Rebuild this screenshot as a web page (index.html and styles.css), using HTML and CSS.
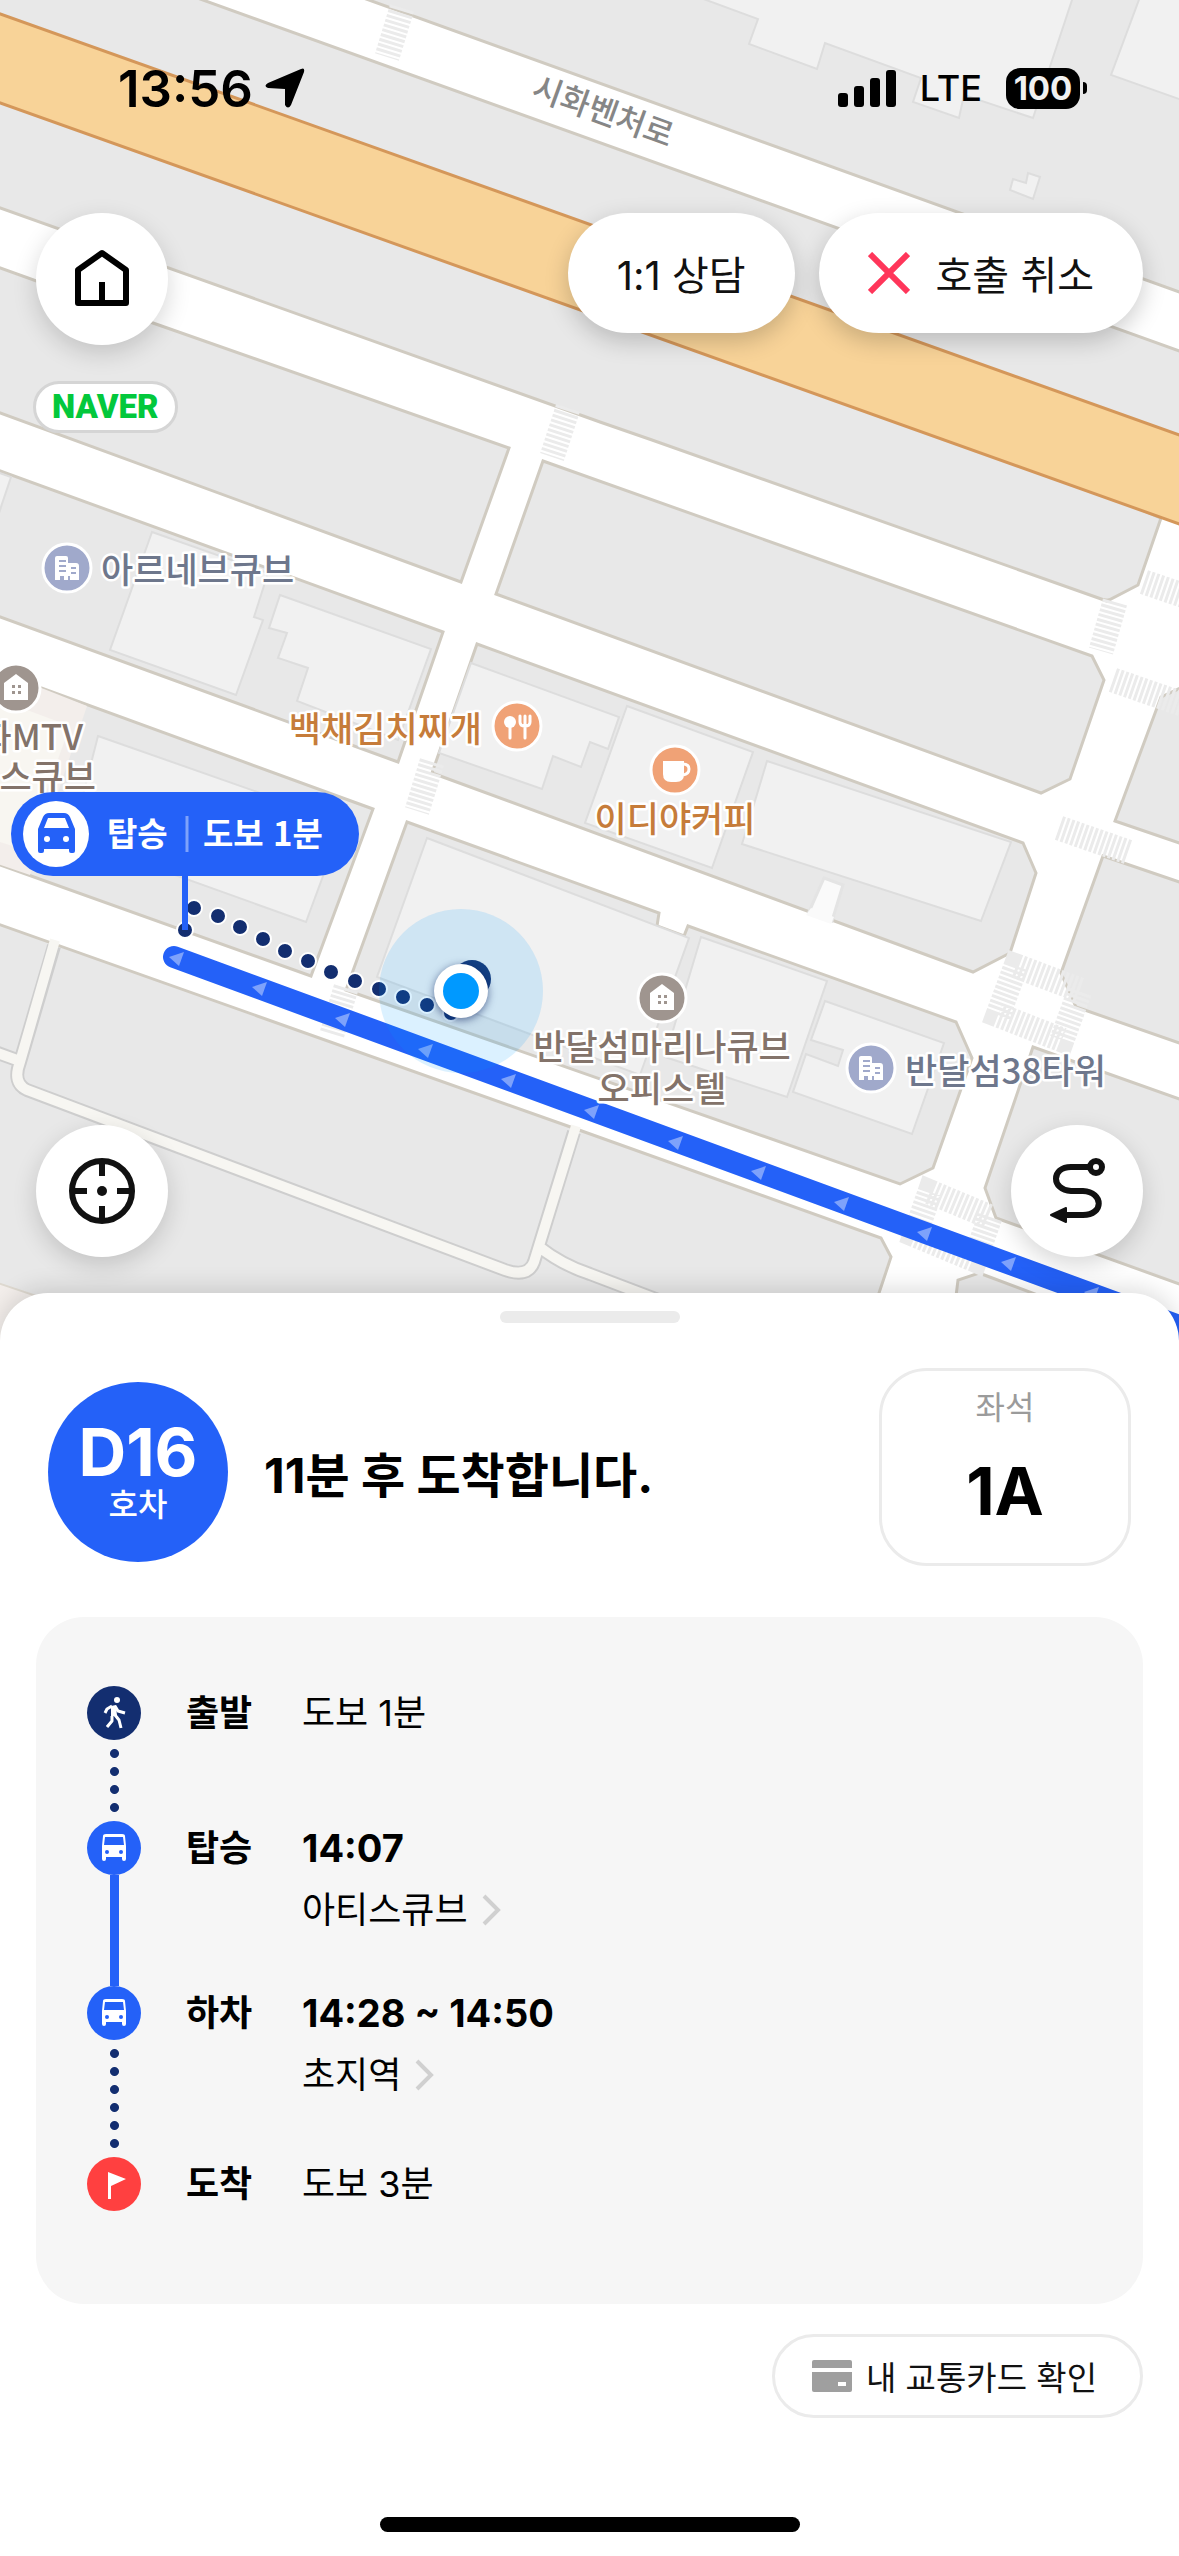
FILE: index.html
```html
<!DOCTYPE html>
<html lang="ko">
<head>
    <meta charset="UTF-8">
    <meta name="viewport" content="width=device-width, initial-scale=1.0">
    <title>호출 현황</title>
    <link rel="stylesheet" href="styles.css">
</head>
<body>
    <section class="map">
        <svg class="map-canvas" viewBox="0 0 1179 1341" preserveAspectRatio="xMidYMid slice">
            <defs>
                <g id="poi-building">
                    <circle r="24" fill="#a0a9cb" stroke="#fff" stroke-width="3"/>
                    <path d="M-12 12V-10q0-2 2-2H-1q2 0 2 2V-5H9q3 0 3 3V12H3V8H1v4H-3V8H-7v4z" fill="#fff"/>
                    <path d="M-8-7H-1M-8-2H-1M-8 3H-1M4 0H9M4 5H9" stroke="#a0a9cb" stroke-width="2"/>
                </g>
                <g id="poi-house">
                    <circle r="24" fill="#9f958f" stroke="#fff" stroke-width="3"/>
                    <path d="M0-14L12-5V12H-12V-5z" fill="#fff"/>
                    <path d="M-4-3h3v3h-3zM2-3h3v3H2zM-4 3h3v3h-3zM2 3h3v3H2z" fill="#9f958f"/>
                </g>
                <path id="route-arrow" d="M-7-2L8-7L3 7z" fill="#7ea2fb"/>
            </defs>

            <rect width="1179" height="1341" fill="#fff"/>

            <!-- Land blocks -->
            <g class="blocks">
                <path d="M355-5L1185 294V-5z"/>
                <path d="M-5-5H189L1185 353V600H-5z"/>
            </g>
            <path d="M-5 206L600 422L1107 601L1138 585L1161 518L1190 520V700H-5z" fill="#fff"/>
            <g class="blocks">
                <path d="M-5 206L600 422L652 440L1107 601L1138 585L1161 518L1000 450L-5 100" fill="none"/>
                <path d="M-5 266L153 323L509 448L461 582L-5 411z"/>
                <path d="M543 461L1092 656L1104 680L1070 779L1041 793L496 594z"/>
                <path d="M-5 469L443 632L398 762L-5 615z"/>
                <path d="M477 644L1023 843L1036 873L1010 953L973 972L432 773z"/>
                <path d="M-5 671L373 809L311 976L-5 863z"/>
                <path d="M407 822L659 913L657 926L684 936L688 926L956 1022L972 1058L933 1168L900 1184L346 990z"/>
                <path d="M1185 686L1161 697L1115 821L1185 845z"/>
                <path d="M1103 856L1185 884V1045L1076 1007L1061 973z"/>
                <path d="M1033 1047L1185 1101V1286L996 1218L985 1188z"/>
                <path d="M-5 923L579 1130L881 1238L891 1257L860 1350H-5z"/>
                <path d="M979 1273L1170 1345H950L958 1280z"/>
            </g>
            <path d="M-5 671L44 689L87 706L30 875L-5 863z" fill="#f3eeeb"/>
            <path d="M0 700L70 726L25 850L0 842z" fill="#f8f6f1"/>
            <path d="M-5 1282L60 1304V1345H-5z" fill="#f3eeeb" stroke="#ded9d0" stroke-width="2"/>

            <!-- Highway -->
            <path d="M-5 12L1185 437V526L-5 101z" fill="#f8d398" stroke="#d4975a" stroke-width="3"/>

            <!-- Buildings -->
            <g class="buildings">
                <path d="M698-3L758 19L749 44L817 69L825 43L921 78L913 102L959 118L964 95L1033 118L1073-3z"/>
                <path d="M1140-3L1111 75L1182 100V-3z"/>
                <path d="M1013 179L1026 183L1028 173L1040 177L1033 199L1010 190z"/>
                <path d="M-3 472L11 477L-3 519z"/>
                <path d="M152 532L268 573L254 617L263 620L236 695L110 650z"/>
                <path d="M280 595L431 649L398 740L297 701L308 668L278 658L287 633L269 628z"/>
                <path d="M471 663L619 717L608 749L590 742L581 767L553 756L542 789L439 753z"/>
                <path d="M627 706L753 752L712 868L585 823z"/>
                <path d="M767 761L1011 842L981 921L742 844z"/>
                <path d="M98 736L343 822L306 922L72 838z"/>
                <path d="M427 838L689 938L640 1075L377 977z"/>
                <path d="M701 937L827 981L787 1097L665 1057z"/>
                <path d="M825 1001L944 1043L912 1134L793 1092L806 1054L838 1066L843 1050L811 1040z"/>
            </g>
            <path d="M824 878L843 885L832 921L809 912z" fill="#fafafa" stroke="#e4e4e4" stroke-width="3"/>
            <path d="M811 908L834 917L831 924L806 915z" fill="#fafafa"/>

            <!-- Footpaths -->
            <g class="path-edge">
                <path d="M-5 1052L17 1060M54 946L20 1062Q12 1083 27 1090L505 1270Q528 1278 534 1262L574 1132M538 1246Q562 1265 590 1274L690 1312"/>
            </g>
            <g class="path-fill">
                <path d="M-5 1052L17 1060M55 940L20 1062Q12 1083 27 1090L505 1270Q528 1278 534 1262L576 1126M538 1246Q562 1265 590 1274L690 1312"/>
            </g>

            <!-- Crosswalks -->
            <g class="crosswalk">
                <path d="M402 8L387 57"/>
                <path d="M568 408L552 457"/>
                <path d="M432 762L417 811"/>
                <path d="M346 988L332 1034"/>
                <path d="M1115 602L1101 651"/>
                <path d="M1144 582L1185 596"/>
                <path d="M1113 680L1185 705"/>
                <path d="M1059 828L1128 852"/>
                <path d="M1016 966L1080 990L1062 1040L998 1015z"/>
                <path d="M930 1192L990 1217L975 1260L915 1235z"/>
            </g>

            <text class="road-name" transform="translate(604 109) rotate(20)">시화벤처로</text>

            <!-- Bus route -->
            <path d="M174 957L1179 1326L1200 1345" fill="none" stroke="#2461f8" stroke-width="22" stroke-linecap="round" stroke-linejoin="round"/>
            <use href="#route-arrow" x="176" y="959"/>
            <use href="#route-arrow" x="259" y="989"/>
            <use href="#route-arrow" x="342" y="1020"/>
            <use href="#route-arrow" x="425" y="1051"/>
            <use href="#route-arrow" x="508" y="1081"/>
            <use href="#route-arrow" x="591" y="1112"/>
            <use href="#route-arrow" x="675" y="1143"/>
            <use href="#route-arrow" x="758" y="1173"/>
            <use href="#route-arrow" x="841" y="1204"/>
            <use href="#route-arrow" x="924" y="1234"/>
            <use href="#route-arrow" x="1008" y="1264"/>
            <use href="#route-arrow" x="1091" y="1294"/>

            <!-- Walking route -->
            <g class="walk-dots">
                <circle cx="185" cy="930" r="8"/>
                <circle cx="194" cy="908" r="8"/>
                <circle cx="218" cy="916" r="8"/>
                <circle cx="240" cy="927" r="8"/>
                <circle cx="263" cy="939" r="8"/>
                <circle cx="285" cy="951" r="8"/>
                <circle cx="308" cy="961" r="8"/>
                <circle cx="331" cy="972" r="8"/>
                <circle cx="355" cy="981" r="8"/>
                <circle cx="379" cy="989" r="8"/>
                <circle cx="403" cy="997" r="8"/>
                <circle cx="427" cy="1005" r="8"/>
                <circle cx="451" cy="1013" r="8"/>
            </g>

            <!-- Places -->
            <use href="#poi-building" x="67" y="568"/>
            <text class="poi office" x="101" y="583">아르네브큐브</text>

            <g transform="translate(517 726)">
                <circle r="24" fill="#f0a276" stroke="#fff" stroke-width="3"/>
                <circle cx="-7" cy="-4" r="6" fill="#fff"/>
                <path d="M-7 0V12M8-1V12M3-10V-4Q3 0 8 0Q13 0 13-4V-10M8-10V0" fill="none" stroke="#fff" stroke-width="3" stroke-linecap="round"/>
            </g>
            <text class="poi food end" x="482" y="742">백채김치찌개</text>

            <g transform="translate(675 770)">
                <circle r="24" fill="#f0a276" stroke="#fff" stroke-width="3"/>
                <path d="M-12-9H9V4Q9 12 1 12H-4Q-12 12-12 4z" fill="#fff"/>
                <path d="M8-6Q14-6 14-1Q14 4 8 5" fill="none" stroke="#fff" stroke-width="3"/>
            </g>
            <text class="poi food middle" x="675" y="832">이디야커피</text>

            <use href="#poi-house" x="16" y="688"/>
            <text class="poi home end" x="83" y="750">시화MTV</text>
            <text class="poi home end" x="96" y="790">스큐브</text>

            <use href="#poi-house" x="662" y="998"/>
            <text class="poi home middle" x="662" y="1060">반달섬마리나큐브</text>
            <text class="poi home middle" x="662" y="1102">오피스텔</text>

            <use href="#poi-building" x="871" y="1068"/>
            <text class="poi office" x="905" y="1084">반달섬38타워</text>

            <!-- Boarding stop -->
            <path d="M185 870V930" stroke="#2461f8" stroke-width="6"/>
            <rect x="11" y="792" width="348" height="84" rx="42" fill="#2461f8"/>
            <circle cx="56" cy="834" r="33" fill="#fff"/>
            <path d="M38 851V829L43 817Q45 813 49 813H64Q68 813 70 817L75 829V851Q75 853 73 853H71Q69 853 69 851V849H44V851Q44 853 42 853H40Q38 853 38 851z" fill="#2461f8"/>
            <path d="M44 828L48 818H65L69 828z" fill="#fff"/>
            <circle cx="47" cy="839" r="3" fill="#fff"/>
            <circle cx="66" cy="839" r="3" fill="#fff"/>
            <text class="stop-text" x="107" y="846">탑승</text>
            <path d="M187 816V852" stroke="#7ea2fb" stroke-width="3"/>
            <text class="stop-text" x="203" y="846">도보 1분</text>

            <!-- Current location -->
            <circle cx="461" cy="991" r="82" fill="#0099ff" fill-opacity=".14"/>
            <circle cx="472" cy="979" r="19" fill="#123f83"/>
            <circle class="me" cx="461" cy="991" r="27"/>
            <circle cx="461" cy="991" r="18" fill="#0099ff"/>
        </svg>

        <div class="status-bar">
            <div class="status-left">
                <span class="time">13:56</span>
                <svg width="40" height="40" viewBox="0 0 40 40">
                    <path d="M36 1Q40-1 39 4L26 37Q23 42 20 37V21L3 20Q-2 18 3 15z"/>
                </svg>
            </div>
            <div class="status-right">
                <svg width="58" height="38" viewBox="0 0 58 38">
                    <rect y="24" width="10" height="14" rx="3"/>
                    <rect x="16" y="17" width="10" height="21" rx="3"/>
                    <rect x="32" y="9" width="10" height="29" rx="3"/>
                    <rect x="48" y="1" width="10" height="37" rx="3"/>
                </svg>
                <span class="network">LTE</span>
                <span class="battery">100</span>
            </div>
        </div>

        <div class="map-nav">
            <button class="round-btn" aria-label="홈">
                <svg viewBox="0 0 132 132">
                    <path d="M42 90V57L66 40L90 57V90zM66 90V69" fill="none" stroke="#000" stroke-width="6" stroke-linejoin="round"/>
                </svg>
            </button>
            <div class="nav-actions">
                <button class="pill-btn">1:1 상담</button>
                <button class="pill-btn cancel">
                    <svg width="42" height="42" viewBox="0 0 42 42">
                        <path d="M2 2L40 40M40 2L2 40" stroke="#ff365a" stroke-width="6"/>
                    </svg>
                    호출 취소
                </button>
            </div>
        </div>

        <span class="provider">NAVER</span>

        <div class="map-tools">
            <button class="round-btn" aria-label="현재 위치">
                <svg viewBox="0 0 132 132">
                    <g fill="none" stroke="#111" stroke-width="6">
                        <circle cx="66" cy="66" r="30"/>
                        <path d="M66 36V51M66 81V96M36 66H51M81 66H96"/>
                    </g>
                    <circle cx="66" cy="66" r="5" fill="#111"/>
                </svg>
            </button>
            <button class="round-btn" aria-label="경로 보기">
                <svg viewBox="0 0 132 132">
                    <g fill="none" stroke="#111" stroke-width="6">
                        <circle cx="85" cy="42" r="6"/>
                        <path d="M79 42H60C40 42 40 65 60 66L72 66C93 67 93 90 72 90H54"/>
                    </g>
                    <path d="M40 90L55 83V97z" fill="#111" stroke="#111" stroke-width="2" stroke-linejoin="round"/>
                </svg>
            </button>
        </div>
    </section>

    <main class="sheet">
        <div class="handle"></div>

        <div class="ride-head">
            <div class="ride-info">
                <div class="bus-badge">
                    <strong>D16</strong>
                    <span>호차</span>
                </div>
                <h1>11분 후 도착합니다.</h1>
            </div>
            <div class="seat">
                <span>좌석</span>
                <strong>1A</strong>
            </div>
        </div>

        <ol class="steps">
            <li>
                <div class="rail">
                    <svg class="step-icon walk" viewBox="0 0 54 54">
                        <circle cx="30" cy="14" r="3" fill="#fff"/>
                        <path d="M24 20L29 19L30 30L24 30z" fill="#fff"/>
                        <path d="M25 20L20 23L18 27M28 20L31 25L38 27M28 29L32 34L34 42M25 30L25 35L20 41" fill="none" stroke="#fff" stroke-width="3" stroke-linejoin="round"/>
                    </svg>
                    <i class="dots four"></i>
                </div>
                <b class="step-name">출발</b>
                <div class="step-detail">도보 1분</div>
            </li>
            <li>
                <div class="rail">
                    <svg class="step-icon bus" viewBox="0 0 54 54">
                        <path d="M15 38V25L16 15Q16 13 19 13H35Q38 13 38 15L39 25V38Q39 40 37 40Q35 40 35 38V36H19V38Q19 40 17 40Q15 40 15 38z" fill="#fff"/>
                        <path d="M17 24L18 16H36L37 24z"/>
                        <circle cx="20" cy="31" r="2"/>
                        <circle cx="34" cy="31" r="2"/>
                    </svg>
                    <i class="line"></i>
                </div>
                <b class="step-name">탑승</b>
                <div class="step-detail">
                    <b>14:07</b>
                    <a href="#">아티스큐브
                        <svg width="20" height="32" viewBox="0 0 20 32"><path d="M2 2L16 16L2 30"/></svg>
                    </a>
                </div>
            </li>
            <li>
                <div class="rail">
                    <svg class="step-icon bus" viewBox="0 0 54 54">
                        <path d="M15 38V25L16 15Q16 13 19 13H35Q38 13 38 15L39 25V38Q39 40 37 40Q35 40 35 38V36H19V38Q19 40 17 40Q15 40 15 38z" fill="#fff"/>
                        <path d="M17 24L18 16H36L37 24z"/>
                        <circle cx="20" cy="31" r="2"/>
                        <circle cx="34" cy="31" r="2"/>
                    </svg>
                    <i class="dots six"></i>
                </div>
                <b class="step-name">하차</b>
                <div class="step-detail">
                    <b>14:28 ~ 14:50</b>
                    <a href="#">초지역
                        <svg width="20" height="32" viewBox="0 0 20 32"><path d="M2 2L16 16L2 30"/></svg>
                    </a>
                </div>
            </li>
            <li>
                <div class="rail">
                    <svg class="step-icon goal" viewBox="0 0 54 54">
                        <path d="M21 15L39 22L24 29V42H21z" fill="#fff"/>
                    </svg>
                </div>
                <b class="step-name">도착</b>
                <div class="step-detail">도보 3분</div>
            </li>
        </ol>

        <div class="sheet-actions">
            <button class="card-btn">
                <svg width="40" height="32" viewBox="0 0 40 32">
                    <rect width="40" height="32" rx="2" fill="#9f9f9f"/>
                    <path d="M0 10H40" stroke="#fff" stroke-width="4"/>
                    <path d="M26 24H34" stroke="#fff" stroke-width="4"/>
                </svg>
                내 교통카드 확인
            </button>
        </div>

        <div class="home-indicator"></div>
    </main>
</body>
</html>
```
FILE: styles.css
```css
* {
    box-sizing: border-box;
}

body {
    margin: 0;
    min-height: 100vh;
    display: flex;
    flex-direction: column;
    background: #fff;
    color: #000;
    font-family: Inter, "Noto Sans CJK KR", sans-serif;
}

button {
    border: none;
    padding: 0;
    background: #fff;
    color: #111;
    font-family: inherit;
    cursor: pointer;
}

svg {
    display: block;
}

/* Map */
.map {
    position: relative;
    flex: 1;
    min-height: 900px;
    display: flex;
    flex-direction: column;
    padding-bottom: 84px;
    overflow: hidden;
}

.map-canvas {
    position: absolute;
    top: 0;
    left: 0;
    width: 100%;
    height: 100%;
}

.status-bar, .map-nav, .provider, .map-tools {
    position: relative;
}

.blocks {
    fill: #e8e8e8;
    stroke: #d0cbc1;
    stroke-width: 3px;
}

.buildings {
    fill: #f1f1f1;
    stroke: #dddddd;
    stroke-width: 2px;
}

.path-edge {
    fill: none;
    stroke: #cecece;
    stroke-width: 14px;
}

.path-fill {
    fill: none;
    stroke: #f7f6f2;
    stroke-width: 10px;
}

.crosswalk {
    fill: none;
    stroke: #ebebeb;
    stroke-width: 25px;
    stroke-dasharray: 3 2;
}

.walk-dots {
    fill: #132e70;
    stroke: #fff;
    stroke-width: 2px;
}

.me {
    fill: #fff;
    filter: drop-shadow(0 2px 4px rgba(10, 30, 90, 0.6));
}

.road-name {
    font: 500 32px "Noto Sans CJK KR", sans-serif;
    fill: #868686;
    text-anchor: middle;
    dominant-baseline: central;
}

.poi {
    font: 500 35px "Noto Sans CJK KR", sans-serif;
    stroke: #fff;
    stroke-width: 5px;
    stroke-linejoin: round;
    paint-order: stroke;
}

.middle {
    text-anchor: middle;
}

.end {
    text-anchor: end;
}

.office {
    fill: #6e778c;
}

.food {
    fill: #c67c3a;
}

.home {
    fill: #83736a;
}

.stop-text {
    font: 700 33px "Noto Sans CJK KR", sans-serif;
    fill: #fff;
}

/* Status bar */
.status-bar {
    display: flex;
    justify-content: space-between;
    align-items: center;
    height: 176px;
    padding: 0 99px 0 118px;
}

.status-left, .status-right {
    display: flex;
    align-items: center;
}

.status-left {
    gap: 12px;
}

.status-right {
    gap: 24px;
}

.time {
    font-size: 51px;
    font-weight: 600;
}

.network {
    font-size: 36px;
    font-weight: 500;
}

.battery {
    position: relative;
    width: 74px;
    border-radius: 14px;
    background: #000;
    color: #f1f1f1;
    font-size: 33px;
    font-weight: 700;
    line-height: 41px;
    text-align: center;
}

.battery::after {
    content: "";
    position: absolute;
    top: 14px;
    right: -7px;
    width: 4px;
    height: 12px;
    border-radius: 0 6px 6px 0;
    background: #000;
}

/* Map controls */
.map-nav {
    display: flex;
    justify-content: space-between;
    align-items: flex-start;
    margin-top: 37px;
    padding: 0 36px;
}

.nav-actions {
    display: flex;
    gap: 24px;
}

.round-btn {
    width: 132px;
    height: 132px;
    border-radius: 50%;
    box-shadow: 0 8px 24px rgba(0, 0, 0, 0.16);
}

.pill-btn {
    display: flex;
    align-items: center;
    gap: 26px;
    height: 120px;
    padding: 0 49px;
    border-radius: 60px;
    font-size: 40px;
    box-shadow: 0 8px 24px rgba(0, 0, 0, 0.2);
}

.provider {
    align-self: flex-start;
    margin: 36px 0 0 33px;
    padding: 0 16px;
    border: 3px solid #d5d5d5;
    border-radius: 26px;
    background: #fff;
    color: #03c83c;
    font-family: Roboto, sans-serif;
    font-size: 33px;
    font-weight: 900;
    line-height: 46px;
}

.map-tools {
    display: flex;
    justify-content: space-between;
    margin-top: auto;
    padding: 0 36px;
}

/* Bottom sheet */
.sheet {
    position: relative;
    margin-top: -48px;
    padding: 18px 36px 24px;
    border-radius: 48px 48px 0 0;
    background: #fff;
    box-shadow: 0 -4px 24px rgba(0, 0, 0, 0.14);
}

.handle {
    width: 180px;
    height: 12px;
    margin: 0 auto;
    border-radius: 6px;
    background: #ebebeb;
}

.ride-head {
    display: flex;
    justify-content: space-between;
    align-items: center;
    margin-top: 45px;
    padding: 0 12px;
}

.ride-info {
    display: flex;
    align-items: center;
    gap: 36px;
    padding-top: 10px;
}

.bus-badge {
    display: flex;
    flex-direction: column;
    align-items: center;
    justify-content: center;
    width: 180px;
    height: 180px;
    border-radius: 50%;
    background: #2461f8;
    color: #fff;
}

.bus-badge strong {
    font-size: 66px;
    line-height: 66px;
}

.bus-badge span {
    font-size: 32px;
    font-weight: 500;
    line-height: 40px;
}

h1 {
    margin: 0;
    font-size: 48px;
    font-weight: 700;
}

.seat {
    display: flex;
    flex-direction: column;
    align-items: center;
    gap: 30px;
    width: 252px;
    height: 198px;
    padding-top: 17px;
    border: 3px solid #ebebeb;
    border-radius: 48px;
}

.seat span {
    color: #9b9b9b;
    font-size: 32px;
    line-height: 40px;
}

.seat strong {
    font-size: 66px;
    line-height: 66px;
}

/* Trip steps */
.steps {
    margin: 51px 0 0;
    padding: 69px 51px 93px;
    border-radius: 48px;
    background: #f6f6f6;
    list-style: none;
    font-size: 36px;
    line-height: 54px;
}

.steps li {
    display: flex;
}

.rail {
    display: flex;
    flex-direction: column;
    align-items: center;
    width: 54px;
    margin-right: 45px;
}

.step-icon {
    width: 54px;
    height: 54px;
    border-radius: 50%;
}

.walk {
    background: #132e70;
}

.bus {
    background: #2461f8;
    fill: #2461f8;
}

.goal {
    background: #ff4040;
}

.dots {
    width: 9px;
    margin: 9px 0;
    background: radial-gradient(circle at 50% 25%, #132e70 4px, transparent 5px) 0 0 / 9px 18px;
}

.four {
    height: 63px;
}

.six {
    height: 99px;
}

.line {
    width: 9px;
    height: 111px;
    background: #2461f8;
}

.step-name {
    width: 116px;
}

.step-detail b {
    display: block;
    font-size: 38px;
}

.step-detail a {
    display: flex;
    align-items: center;
    gap: 14px;
    margin-top: 8px;
    color: #000;
    text-decoration: none;
}

.step-detail a svg {
    fill: none;
    stroke: #d0d0d0;
    stroke-width: 4px;
}

/* Actions */
.sheet-actions {
    display: flex;
    justify-content: flex-end;
    margin-top: 30px;
}

.card-btn {
    display: flex;
    align-items: center;
    gap: 14px;
    height: 84px;
    padding: 0 43px 0 37px;
    border: 3px solid #ebebeb;
    border-radius: 42px;
    font-size: 33px;
}

.home-indicator {
    width: 420px;
    height: 15px;
    margin: 99px auto 0;
    border-radius: 8px;
    background: #000;
}
```
